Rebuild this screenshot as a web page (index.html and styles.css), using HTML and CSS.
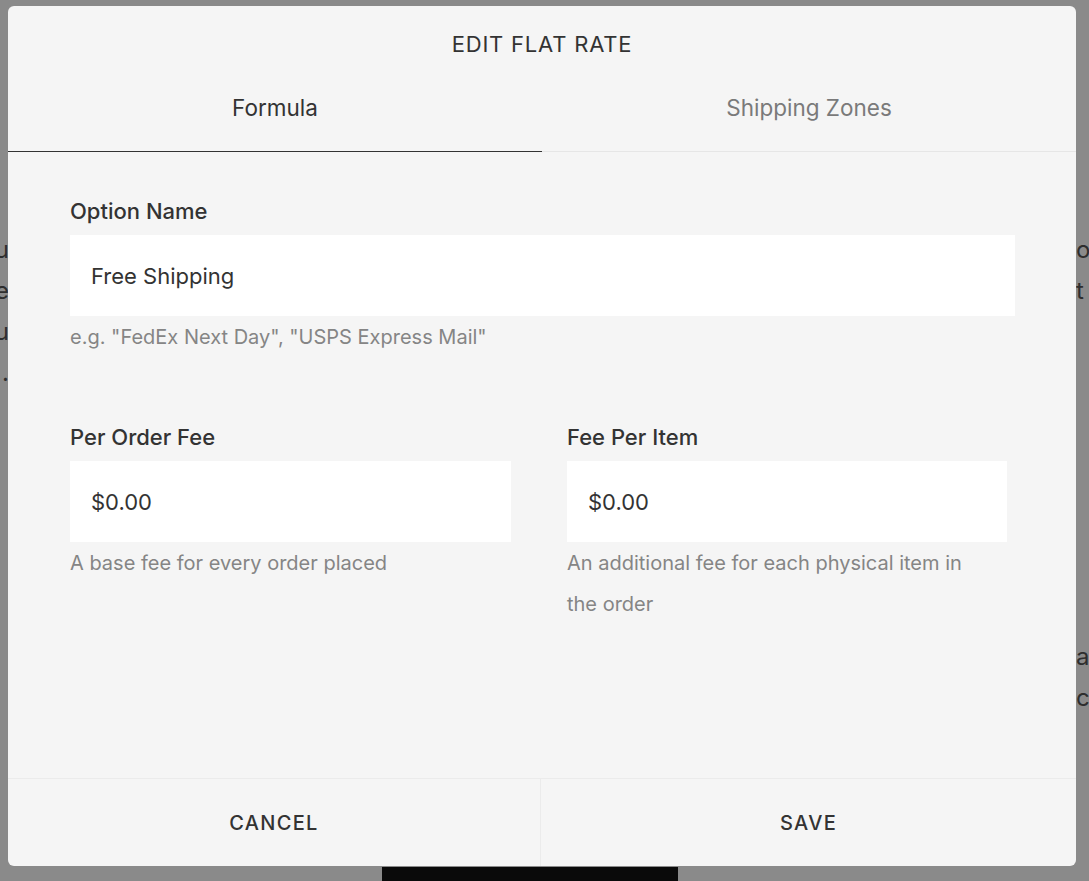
FILE: index.html
```html
<!DOCTYPE html>
<html>
<head>
<meta charset="utf-8">
<link rel="stylesheet" href="styles.css">
</head>
<body>
<div class="page">
  <div class="bg-col bg-left">
    <p>you</p><p>the</p><p>su</p><p>.</p>
  </div>
  <div class="bg-mid">
    <div class="bg-button"></div>
  </div>
  <div class="bg-col bg-right">
    <p>o</p><p>t</p><p class="gap">a</p><p>ch</p>
  </div>
</div>

<div class="modal">
  <h1 class="title">EDIT FLAT RATE</h1>
  <div class="tabs">
    <div class="tab active">Formula</div>
    <div class="tab">Shipping Zones</div>
  </div>
  <div class="body">
    <div class="field">
      <label class="label">Option Name</label>
      <div class="input wide">Free Shipping</div>
      <div class="help">e.g. "FedEx Next Day", "USPS Express Mail"</div>
    </div>
    <div class="row">
      <div class="field">
        <label class="label">Per Order Fee</label>
        <div class="input">$0.00</div>
        <div class="help">A base fee for every order placed</div>
      </div>
      <div class="field">
        <label class="label">Fee Per Item</label>
        <div class="input">$0.00</div>
        <div class="help narrow">An additional fee for each physical item in the order</div>
      </div>
    </div>
  </div>
  <div class="footer">
    <div class="btn">CANCEL</div>
    <div class="btn">SAVE</div>
  </div>
</div>
</body>
</html>
```

FILE: styles.css
```css
* { box-sizing: border-box; }
html, body {
  margin: 0;
  padding: 0;
  width: 1089px;
  height: 881px;
  overflow: hidden;
  background: #8a8a8a;
  font-family: Inter, "Open Sans", sans-serif;
}
.page {
  display: grid;
  grid-template-columns: 9px 1fr 13px;
  height: 881px;
}
.bg-col {
  overflow: hidden;
  white-space: nowrap;
  font-size: 24px;
  line-height: 41px;
  color: #2e2e2e;
  padding-top: 229px;
}
.bg-col p { margin: 0; }
.bg-left { text-align: right; direction: rtl; }
.bg-right { text-align: left; }
.bg-right p.gap { margin-top: 325px; }
.bg-mid {
  display: flex;
  justify-content: flex-start;
  align-items: flex-end;
}
.bg-button {
  width: 296px;
  height: 14px;
  background: #0a0a0a;
  margin-left: 373px;
}

.modal {
  position: absolute;
  left: 8px;
  top: 6px;
  width: 1068px;
  height: 860px;
  background: #f5f5f5;
  border-radius: 6px;
  display: flex;
  flex-direction: column;
  color: #333;
  overflow: hidden;
}
.title {
  margin: 0;
  height: 76px;
  padding-top: 25px;
  text-align: center;
  font-size: 22px;
  font-weight: 400;
  letter-spacing: 0.8px;
  line-height: 26px;
  color: #333;
}
.tabs {
  display: grid;
  grid-template-columns: 534px 534px;
  border-bottom: 1px solid #e6e6e6;
}
.tab {
  text-align: center;
  font-size: 22.5px;
  line-height: 26px;
  padding: 13px 0 30px;
  color: #7a7a7a;
}
.tab.active {
  color: #333;
  box-shadow: inset 0 -1px 0 #333;
  margin-bottom: -1px;
  padding-bottom: 31px;
}
.body {
  flex: 1;
  padding: 46px 61px 0 62px;
  display: flex;
  flex-direction: column;
  gap: 66px;
}
.field {
  display: flex;
  flex-direction: column;
}
.label {
  font-size: 22px;
  font-weight: 500;
  line-height: 26px;
  color: #333;
  margin-bottom: 11px;
}
.input {
  background: #fff;
  height: 81px;
  padding: 0 21px;
  display: flex;
  align-items: center;
  font-size: 22px;
  color: #333;
}
.help {
  font-size: 20px;
  line-height: 41px;
  color: #858585;
  margin-top: 1px;
}
.help.narrow { padding-right: 20px; }
.row {
  display: grid;
  grid-template-columns: 441px 440px;
  column-gap: 56px;
}
.footer {
  height: 88px;
  border-top: 1px solid #ebebeb;
  display: grid;
  grid-template-columns: 533px 535px;
}
.btn {
  display: flex;
  align-items: center;
  justify-content: center;
  font-size: 20px;
  font-weight: 500;
  letter-spacing: 1.3px;
  color: #333;
}
.btn:first-child { border-right: 1px solid #ebebeb; }
```
